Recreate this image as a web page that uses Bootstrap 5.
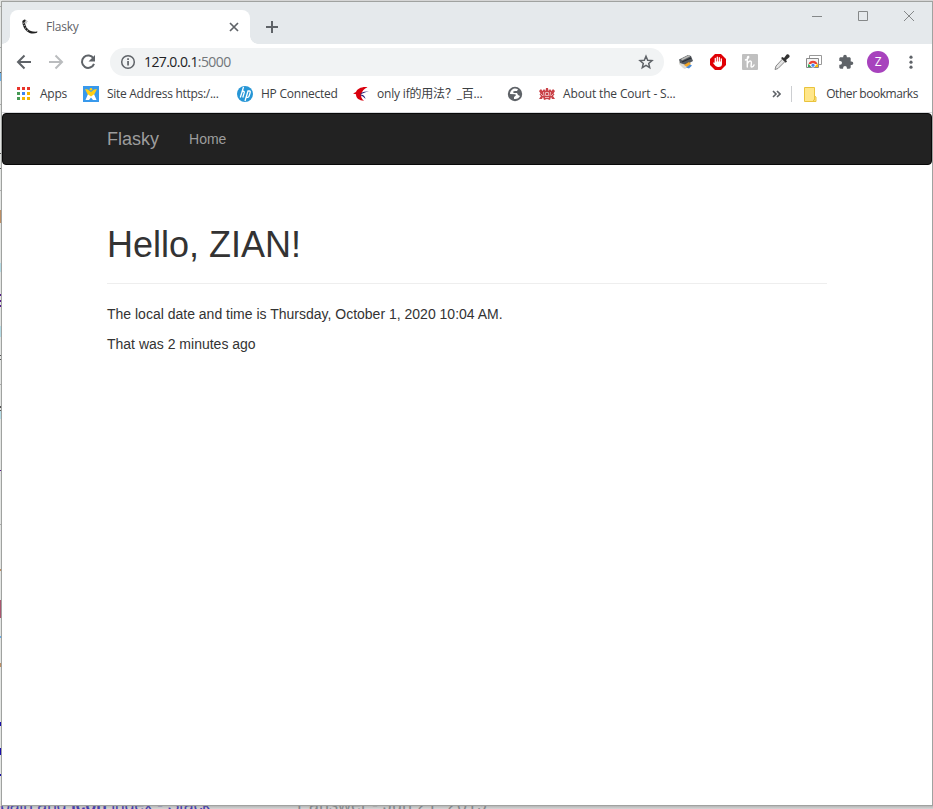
<!DOCTYPE html>
<html lang="en">
<head>
<meta charset="utf-8">
<title>Flasky</title>
<link href="https://cdn.jsdelivr.net/npm/bootstrap@5.3.0/dist/css/bootstrap.min.css" rel="stylesheet">
<style>
html,body{height:100%;overflow:hidden}
body{background:#d6d6d6;font-family:"Liberation Sans",Arial,sans-serif;font-size:14px;line-height:20px;color:#333}
svg{display:block;flex:none}
.desk{width:933px;height:809px;overflow:hidden}
.win{left:1px;top:1px;width:932px;height:805px;border:1px solid #a0a2a0;background:#fff}
.ui{font-family:"Open Sans","Noto Sans CJK SC",sans-serif;font-size:12px;line-height:16px;letter-spacing:-.24px;color:#3c4043;white-space:nowrap}
.strip{height:42px;background:#e5e9ec;padding-left:8px}
.browser-tab{width:240px;height:34px;margin-top:8px;background:#fff;border-radius:8px 8px 0 0;padding:0 10px 0 12px;color:#5f6368;position:relative}
.browser-tab::before,.browser-tab::after{content:"";position:absolute;bottom:0;width:8px;height:8px}
.browser-tab::before{left:-8px;background:radial-gradient(circle at 0 0,transparent 7.5px,#fff 8px)}
.browser-tab::after{right:-8px;background:radial-gradient(circle at 100% 0,transparent 7.5px,#fff 8px)}
.tools{height:36px;padding-left:14px}
.omni{width:554px;height:28px;border-radius:14px;background:#f1f3f4;margin-left:14px;padding:0 10px;font-size:14px;letter-spacing:-.58px;color:#202124}
.addr{margin-left:8px}
.port{color:#72767a}
.avatar{width:22px;height:22px;border-radius:50%;background:#a742bd;color:#fff;font-size:12px}
.marks{height:33px;padding:0 0 4px 13px;border-bottom:1px solid #d7d9dc}
.bm{gap:8px}
.other{margin-left:9px;margin-right:14px;letter-spacing:-.45px}
.site-nav{height:52px;background:#222;border:1px solid #080808;border-radius:4px;padding:0 0 0 104px;color:#9d9d9d}
.brand{font-size:18px}
.page{width:720px;margin:60px 0 0 105px}
.page h1{font-size:36px;line-height:39.6px;margin:0 0 20px;padding-bottom:18px;border-bottom:1px solid #eee;font-weight:400;color:#333}
.page p{margin:0 0 10px}
.behind{left:0;width:2px}
.below{top:794px;font-size:18px;line-height:22px;white-space:nowrap}
.result-title{left:0;color:#1a0dab;letter-spacing:-.35px}
.result-date{left:294px;color:#70757a}
.shade{left:0;top:806px;width:933px;height:3px;background:linear-gradient(rgba(150,150,150,.5),rgba(214,214,214,.2))}
</style>
<script src="https://cdn.jsdelivr.net/npm/bootstrap@5.3.0/dist/js/bootstrap.bundle.min.js"></script>
</head>
<body>
<div class="desk position-relative">
  <!-- slivers of the window underneath -->
  <svg class="behind position-absolute top-0" height="809" viewBox="0 0 2 809" shape-rendering="crispEdges">
    <path fill="#e3e5e3" d="M0 0h2v809H0z"/>
    <path fill="#aaa" d="M0 6h1v1H0zM0 47h1v1H0zM0 104h1v1H0zM0 190h1v1H0zM0 384h1v1H0zM0 524h1v1H0z"/>
    <path fill="#555" d="M0 72h2v1H0zM0 153h2v1H0zM0 168h2v1H0zM0 355h2v1H0zM0 359h2v1H0zM0 406h2v2H0zM0 410h2v1H0z"/>
    <path fill="#69aee6" d="M0 73h2v8H0zM0 636h2v2H0z"/><path fill="#bd8e63" d="M0 210h2v13H0zM0 569h2v2H0zM0 663h2v4H0z"/>
    <path fill="#b5dce6" d="M0 263h2v9H0zM0 326h2v11H0zM0 411h2v8H0z"/>
    <path fill="#551a8b" d="M0 294h2v2H0zM0 300h2v2H0zM0 305h2v2H0zM0 470h2v1H0z"/>
    <path fill="#a9566f" d="M0 600h2v18H0z"/><path fill="#1a0dab" d="M0 722h2v4H0zM0 748h2v7H0zM0 774h2v2H0z"/>
  </svg>
  <div class="below result-title position-absolute">pain and <b>icon</b> index - Stack</div>
  <div class="below result-date position-absolute">1 answer - Jun 21, 2019</div>
  <div class="shade position-absolute"></div>

  <div class="win position-absolute">
    <div class="ui">
      <div class="strip d-flex">
        <div class="browser-tab d-flex align-items-center">
          <svg width="16" height="16" viewBox="0 0 16 16"><path fill="#222" d="M.3 2l2-1.500L4 1 3.300 2.500c-.6 2 .3 5 2.500 7.500C8 12 10.500 13 15.500 12.600L15 13.800c-2 .9-5 1.100-7.500.2C3.500 12 1 8.500.6 5z"/><path stroke="#bbb" stroke-width=".9" fill="none" d="M1 4.500l2-1M1.300 7l2-1M3 9.500l1.700-1.200M5 12l1-1.500"/><path stroke="#999" stroke-width=".8" d="M3.500 1.500l2 1M3.500 3.500l1.500.5"/></svg>
          <span class="ms-2">Flasky</span>
          <svg class="ms-auto" width="12" height="12" viewBox="0 0 12 12"><path stroke="#5f6368" stroke-width="1.700" d="M2 2l8 8M10 2l-8 8"/></svg>
        </div>
        <svg width="14" height="14" viewBox="0 0 14 14" style="margin:18px 0 0 15px"><path stroke="#5f6368" stroke-width="2" d="M7 1v12M1 7h12"/></svg>
        <svg class="ms-auto" width="106" height="12" viewBox="0 0 106 12" style="margin:8px 15px 0 0"><path fill="none" stroke="#858889" d="M1 6.500h10M47.500 1.500h9v9h-9zM93 1l10 10M103 1L93 11"/></svg>
      </div>
      <div class="tools d-flex align-items-center">
        <svg width="16" height="16" viewBox="0 0 16 16"><path fill="none" stroke="#5f6368" stroke-width="2" d="M15 8H2M8.500 1.500L2 8l6.500 6.500"/></svg>
        <svg width="16" height="16" viewBox="0 0 16 16" style="margin-left:16px"><path fill="none" stroke="#babcbe" stroke-width="2" d="M1 8h13M7.500 1.500L14 8l-6.500 6.500"/></svg>
        <svg width="16" height="16" viewBox="0 0 16 16" style="margin-left:16px"><path fill="none" stroke="#5f6368" stroke-width="2" d="M13.500 4.500A6.200 6.200 0 1 0 14 9.800"/><path fill="#5f6368" d="M15 1v6.500H8.500z"/></svg>
        <div class="omni d-flex align-items-center">
          <svg width="16" height="16" viewBox="0 0 16 16"><circle cx="8" cy="8" r="6.300" fill="none" stroke="#5f6368" stroke-width="1.500"/><path fill="#5f6368" d="M7.200 7h1.700v4.500H7.200zM7.200 4.300h1.700V6H7.200z"/></svg>
          <span class="addr">127.0.0.1<span class="port">:5000</span></span>
          <svg class="ms-auto" width="16" height="16" viewBox="0 0 16 16"><path fill="none" stroke="#5f6368" stroke-width="1.500" stroke-linejoin="miter" d="M8 2.200l1.700 4 4.300.4-3.300 2.800 1 4.200L8 11.400l-3.700 2.200 1-4.200L2 6.600l4.300-.4z"/></svg>
        </div>
        <div class="d-flex align-items-center" style="margin-left:14px;gap:16px">
          <svg width="16" height="16" viewBox="0 0 16 16"><path fill="#d9d9d4" d="M1 8l3-1 8 4-5 4-2-1-4-4z"/><path fill="#555a60" d="M1 5.500l9-4.500 3 1 2 5-7 4-6-2z"/><path fill="#b9b9b5" d="M3 5l8-4 1 1.500-8 4z"/><path stroke="#292d33" stroke-width="1.300" d="M4 8l9-4"/><path fill="#f5a623" d="M6 11l5-3 2 2-4 3z"/><path fill="#4a8ddb" d="M8 13.500l4-3 2 1-3 3z"/></svg>
          <svg width="16" height="16" viewBox="0 0 16 16"><path fill="#e00005" d="M5 0h6l5 5v6l-5 5H5l-5-5V5z"/><path fill="none" stroke="#fff" stroke-linecap="round" stroke-width="1.300" d="M5.300 9V4.500M7.300 8V3.200M9.300 8V3.700M11.300 9V5"/><path fill="#fff" d="M4.700 7.500H12V10c0 2-1 3-3.500 3-2 0-3-.8-5.500-4l1-.8 1.200 1z"/></svg>
          <svg width="16" height="16" viewBox="0 0 16 16"><rect width="16" height="16" rx="1" fill="#c0c0c0"/><path fill="none" stroke="#fff" stroke-width="1.400" stroke-linecap="round" d="M3.500 6C6 5 7.500 2.500 6.200 2.500S5.300 6 5.300 13M5.500 9.500c.7-2.500 3.900-3.500 3.900-1S8.400 13 9.800 13s1.800-.8 2.200-2"/></svg>
          <svg width="16" height="16" viewBox="0 0 16 16"><path fill="#e4e4e4" stroke="#888" d="M8.500 5l2.500 2.500-7 7-3 1 1-3.500z"/><path fill="#333" d="M7 4l1.500-1L10 4l2.500-3.300c1.500-1.300 4 .8 2.800 2.600L12 6l1 1.500-1.300 1.300z"/></svg>
          <svg width="16" height="16" viewBox="0 0 16 16"><path fill="#fff" stroke="#999" d="M3.500 1.500h12v9h-12z"/><path fill="#f4f4f4" stroke="#888" d="M.5 4.500h12v9H.5z"/><path fill="#ea4335" d="M2.500 10a4.800 4.800 0 0 1 9 0z"/><path fill="#34a853" d="M2 13c-.1-1.300 0-2.300.5-3.200L5.500 13z"/><path fill="#fbbc05" d="M8 13l3.500-3.500c.5 1 .6 2.500.5 3.500z"/><circle cx="7" cy="11.300" r="2" fill="#4285f4" stroke="#fff" stroke-width=".7"/></svg>
          <svg width="16" height="16" viewBox="0 0 16 16"><path fill="#5f6368" d="M13.500 7.400h-.8V4.600c0-.8-.6-1.400-1.400-1.400H8.800v-.7a1.800 1.800 0 0 0-3.600 0v.7H2.600c-.7 0-1.300.6-1.300 1.400v2.300h.8a1.900 1.900 0 0 1 0 3.800h-.8v2.600c0 .8.600 1.400 1.300 1.400h2.500V14a1.900 1.900 0 0 1 3.800 0v.7h2.400c.8 0 1.400-.6 1.400-1.400V11h.8a1.800 1.800 0 0 0 0-3.600z"/></svg>
        </div>
        <div class="avatar d-flex align-items-center justify-content-center" style="margin-left:13px">Z</div>
        <svg width="4" height="16" viewBox="0 0 4 16" style="margin-left:19.500px"><g fill="#5f6368"><circle cx="2" cy="3.200" r="1.600"/><circle cx="2" cy="8.200" r="1.600"/><circle cx="2" cy="13.200" r="1.600"/></g></svg>
      </div>
      <div class="marks d-flex align-items-center">
        <div class="bm d-flex align-items-center" style="width:68px">
          <svg width="17" height="16" viewBox="0 0 17 16" shape-rendering="crispEdges"><path fill="#e8352b" d="M2 1h3v3H2zM7 1h3v3H7zM12 1h3v3h-3z"/><path fill="#459a55" d="M2 6h3v3H2zM2 11h3v3H2z"/><path fill="#3b83f3" d="M7 6h3v3H7z"/><path fill="#f4b400" d="M12 6h3v3h-3zM7 11h3v3H7zM12 11h3v3h-3z"/></svg><span>Apps</span>
        </div>
        <div class="bm d-flex align-items-center" style="width:154px">
          <svg width="16" height="16" viewBox="0 0 16 16"><path fill="#3899ec" d="M0 0h16v16H0z"/><path fill="#fff" d="M2.500 14L5 8h6l2.500 6H10l-2-2.500L6 14z"/><path fill="#ffcf16" d="M2 3l3 .5L8 6l3-2.500L14 3l-2.500 5L8 10.500 4.500 8z"/><circle cx="8" cy="3.200" r="1.300" fill="#ffcf16"/></svg><span style="letter-spacing:-.29px">Site Address https:/...</span>
        </div>
        <div class="bm d-flex align-items-center" style="width:116px">
          <svg width="16" height="16" viewBox="0 0 16 16"><circle cx="8" cy="8" r="8" fill="#2696d6"/><path fill="none" stroke="#fff" stroke-width="1.300" d="M6.500 1L3.300 11.500M4.700 6.500c.7-1.700 3-1.700 2.500.2l-1.400 4.800M8 15l3-10h1.300c1.300 0 1 1 .8 1.700L12.100 10c-.3 1-.8 1.300-1.500 1.300H9.200"/></svg><span>HP Connected</span>
        </div>
        <div class="bm d-flex align-items-center" style="width:154px">
          <svg width="16" height="16" viewBox="0 0 16 16"><path fill="#d9000d" d="M14.500 1.200C8.500.5 4 3 3 6L0 7.500l3 .8c0 4 3 6.200 8 6.400C8.500 13 7.500 10 8.500 7.500 9.300 5 11 2.500 14.500 1.200z"/><path fill="#26247b" d="M16 5.500c-4-.5-8 .5-9 3 2-1 5-2.300 9-3zM7 9c3-1 5 1 5.500 4C11 11 9 9.800 7 9z"/></svg><span lang="zh" style="letter-spacing:-.19px">only if的用法？_百...</span>
        </div>
        <svg width="16" height="16" viewBox="0 0 16 16"><circle cx="8" cy="8" r="7.200" fill="#5f6368"/><path fill="#fff" d="M6 3c-2 1-3 3-3 5l5 .2c1 .2 1.300 1 .5 1.600L7 11v2c3 .4 5-1 6-3l-2-1-1-2H6.500l-.3-1.500L8 5l2 0 1-1.700C9 2.500 8 2.400 6 3z"/></svg>
        <div class="bm d-flex align-items-center" style="margin-left:16px">
          <svg width="16" height="16" viewBox="0 0 16 16"><path fill="#c94147" d="M0 5l2-2 1.500 2L5 3l1.500 2L7 2h2l.5 3L11 3l1.500 2L14 3l2 2-1.500 2.500 1 1L14 10l2 3h-3l-1-2-1 3-3-1-3 1-1-3-1 2H0l2-3-1.500-1.500 1-1z"/><path fill="none" stroke="#fff" stroke-width=".6" d="M4.500 6l.5 4M11.500 6l-.5 4M6.500 6.500h3v3h-3zM2 8l2 2M14 8l-2 2M6 11.500h4"/></svg><span style="letter-spacing:-.15px">About the Court - S...</span>
        </div>
        <div class="d-flex align-items-center ms-auto">
          <svg width="9" height="8" viewBox="0 0 9 8"><path fill="none" stroke="#5f6368" stroke-width="1.600" d="M1 1l3 3-3 3M5 1l3 3-3 3"/></svg>
          <svg width="1" height="16" style="margin:0 12px 0 10px"><path fill="#ccced1" d="M0 0h1v16H0z"/></svg>
          <svg width="13" height="15" viewBox="0 0 13 15"><path fill="#ffe689" stroke="#e9c33c" d="M.5.500h10V9l1.500 1v4.500H.5zM10.500 9v4h-1v1.500"/></svg>
          <span class="other">Other bookmarks</span>
        </div>
      </div>
    </div>
    <nav class="site-nav d-flex align-items-center">
      <span class="brand">Flasky</span><span style="margin-left:30px">Home</span>
    </nav>
    <main class="page">
      <h1>Hello, ZIAN!</h1>
      <p>The local date and time is Thursday, October 1, 2020 10:04 AM.</p>
      <p>That was 2 minutes ago</p>
    </main>
  </div>
</div>
</body>
</html>
